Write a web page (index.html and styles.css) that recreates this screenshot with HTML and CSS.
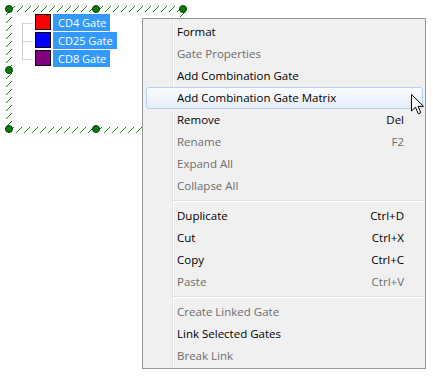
FILE: index.html
```html
<!DOCTYPE html>
<html lang="en">
<head>
    <meta charset="UTF-8">
    <title>Gate Context Menu</title>
    <link rel="stylesheet" href="styles.css">
</head>
<body>
  <div class="canvas">
    <div class="selection">
      <div class="selection-inner">
        <div class="tree">
          <svg class="tree-lines" width="13" height="54" viewBox="0 0 13 54">
            <path d="M0.5 9.5V45.5M0.5 9.5H11M0.5 27.5H11M0.5 45.5H11" stroke="#a8a8a8" stroke-dasharray="1 1" fill="none"/>
          </svg>
          <ul class="gates">
            <li class="gate"><span class="swatch swatch-red"></span><span class="gate-label">CD4 Gate</span></li>
            <li class="gate"><span class="swatch swatch-blue"></span><span class="gate-label">CD25 Gate</span></li>
            <li class="gate"><span class="swatch swatch-purple"></span><span class="gate-label focused">CD8 Gate</span></li>
          </ul>
        </div>
      </div>
      <span class="handle h-tl"></span>
      <span class="handle h-tm"></span>
      <span class="handle h-tr"></span>
      <span class="handle h-ml"></span>
      <span class="handle h-bl"></span>
      <span class="handle h-bm"></span>
    </div>

    <div class="context-menu">
      <div class="menu-item">Format</div>
      <div class="menu-item disabled">Gate Properties</div>
      <div class="menu-item">Add Combination Gate</div>
      <div class="menu-item active">Add Combination Gate Matrix</div>
      <div class="menu-item">Remove<span class="shortcut">Del</span></div>
      <div class="menu-item disabled">Rename<span class="shortcut">F2</span></div>
      <div class="menu-item disabled">Expand All</div>
      <div class="menu-item disabled">Collapse All</div>
      <div class="menu-sep"></div>
      <div class="menu-item">Duplicate<span class="shortcut">Ctrl+D</span></div>
      <div class="menu-item">Cut<span class="shortcut">Ctrl+X</span></div>
      <div class="menu-item">Copy<span class="shortcut">Ctrl+C</span></div>
      <div class="menu-item disabled">Paste<span class="shortcut">Ctrl+V</span></div>
      <div class="menu-sep"></div>
      <div class="menu-item disabled">Create Linked Gate</div>
      <div class="menu-item">Link Selected Gates</div>
      <div class="menu-item disabled">Break Link</div>
    </div>

    <!-- mouse pointer -->
    <svg class="cursor" width="14" height="22" viewBox="0 0 14 22">
      <path d="M0.5 0.5V17L4.5 13.2L7.3 19.8L9.8 18.7L7.1 12.3H12.5Z" fill="#fff" stroke="#000" stroke-linejoin="round"/>
    </svg>
  </div>
</body>
</html>
```

FILE: styles.css
```css
body {
    margin: 0;
    background: #fff;
    font-family: "Open Sans", "Noto Sans", sans-serif;
}

.canvas {
    position: relative;
    width: 433px;
    height: 377px;
    overflow: hidden;
}

/* hatched selection frame */
.selection {
    position: relative;
    margin: 6px 0 0 6px;
    width: 168px;
    height: 115px;
    padding: 6px;
    background: repeating-linear-gradient(135deg, #138a13 0 1px, transparent 1px 5.66px);
}

.selection-inner {
    height: 100%;
    background: #fff;
}

.handle {
    position: absolute;
    width: 6px;
    height: 6px;
    border: 1px solid #0b3d0b;
    border-radius: 50%;
    background: #0a7d0a;
}
.h-tl { left: -1px;  top: -1px; }
.h-tm { left: 86px;  top: -1px; }
.h-tr { left: 173px; top: -1px; }
.h-ml { left: -1px;  top: 60px; }
.h-bl { left: -1px;  top: 119px; }
.h-bm { left: 86px;  top: 119px; }

.tree {
    display: flex;
    padding: 2px 0 0 10px;
}

.tree-lines {
    flex: none;
}

.gates {
    list-style: none;
    margin: 0;
    padding: 0;
}

.gate {
    display: flex;
    height: 18px;
}

.swatch {
    width: 14px;
    height: 14px;
    border: 1px solid #000;
}
.swatch-red { background: #ff0000; }
.swatch-blue { background: #0000ff; }
.swatch-purple { background: #800080; }

.gate-label {
    margin-left: 2px;
    padding: 0 4px 0 5px;
    height: 17px;
    line-height: 17px;
    font-size: 11px;
    color: #fff;
    background: #3399ff;
}
.gate-label.focused {
    outline: 1px dotted #d07020;
    outline-offset: -1px;
}

/* popup menu */
.context-menu {
    position: absolute;
    left: 142px;
    top: 18px;
    width: 282px;
    padding: 2px 0 1px;
    border: 1px solid #979797;
    background: linear-gradient(to right, transparent 29px, #e2e3e3 29px 30px, #fff 30px 31px, transparent 31px), #f0f0f0;
    font-size: 11.5px;
    color: #000;
}

.menu-item {
    box-sizing: border-box;
    display: flex;
    justify-content: space-between;
    align-items: center;
    height: 22px;
    margin: 0 2px 0 3px;
    padding: 0 18px 2px 30px;
    border: 1px solid transparent;
    border-radius: 3px;
}

.menu-item.disabled {
    color: #6d6d6d;
}

.menu-item.active {
    border-color: #b4d2f4;
    background: linear-gradient(#fafcfe, #e6eefa);
}

.menu-sep {
    height: 8px;
    margin-left: 30px;
    margin-right: 2px;
    background: linear-gradient(transparent 3px, #e0e0e0 3px 4px, #fff 4px 5px, transparent 5px);
}

.cursor {
    position: absolute;
    left: 411px;
    top: 94px;
}
```
